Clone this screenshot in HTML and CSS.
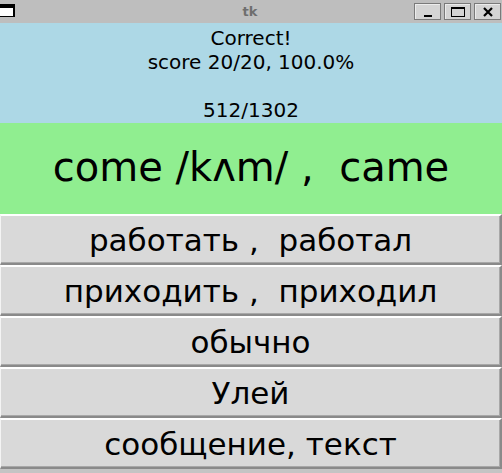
FILE: index.html
```html
<!DOCTYPE html>
<html>
<head>
<meta charset="utf-8">
<link rel="stylesheet" href="styles.css">
</head>
<body>
<div class="window">
  <div class="titlebar">
    <div class="winicon"></div>
    <div class="title">tk</div>
    <div class="wbtns">
      <div class="wbtn"><svg width="12" height="12" viewBox="0 0 12 12"><rect x="2" y="9" width="8" height="2" fill="#000"/></svg></div>
      <div class="wbtn"><svg width="16" height="12" viewBox="0 0 16 12"><rect x="1.5" y="1.5" width="13" height="9" fill="none" stroke="#000" stroke-width="1"/><rect x="1" y="1" width="14" height="2" fill="#000"/></svg></div>
      <div class="wbtn"><svg width="12" height="12" viewBox="0 0 12 12"><path d="M2 2 L10 10 M10 2 L2 10" stroke="#000" stroke-width="2.2"/></svg></div>
    </div>
  </div>
  <div class="status">
    <div>Correct!</div>
    <div>score 20/20, 100.0%</div>
    <div>&nbsp;</div>
    <div>512/1302</div>
  </div>
  <div class="word">come /kʌm/ ,&nbsp; came</div>
  <div class="choices">
    <div class="choice">работать ,&nbsp; работал</div>
    <div class="choice">приходить ,&nbsp; приходил</div>
    <div class="choice">обычно</div>
    <div class="choice">Улей</div>
    <div class="choice">сообщение, текст</div>
  </div>
</div>
</body>
</html>
```
FILE: styles.css
```css
html, body {
  margin: 0;
  padding: 0;
}
body {
  width: 502px;
  height: 473px;
  overflow: hidden;
  background: #c4c4c4;
  font-family: "DejaVu Sans", sans-serif;
  color: #000;
}
.window {
  display: flex;
  flex-direction: column;
  width: 502px;
  height: 473px;
}
.titlebar {
  position: relative;
  height: 23px;
  background: #bebebe;
  display: flex;
  align-items: center;
  justify-content: center;
}
.winicon {
  position: absolute;
  left: 0;
  top: 4px;
  width: 13px;
  height: 8px;
  background: #fff;
  border-top: 4px solid #000;
  border-right: 2px solid #000;
  border-bottom: 1px solid #000;
}
.title {
  font-weight: bold;
  font-size: 13px;
  color: #6e6e6e;
  margin-left: -2px;
}
.wbtns {
  position: absolute;
  right: 1px;
  top: 3px;
  display: flex;
  gap: 3px;
}
.wbtn {
  width: 25px;
  height: 15px;
  background: #d4d4d4;
  border: 1px solid #7a7a7a;
  box-shadow: inset 1px 1px 0 #ececec;
  display: flex;
  align-items: center;
  justify-content: center;
}
.status {
  height: 100px;
  background: #add8e6;
  font-size: 20px;
  line-height: 24px;
  text-align: center;
  display: flex;
  flex-direction: column;
  justify-content: center;
  padding-top: 2px;
  box-sizing: border-box;
}
.word {
  height: 91px;
  background: #90ee90;
  font-size: 40px;
  display: flex;
  align-items: center;
  justify-content: center;
  white-space: pre;
  padding-bottom: 4px;
  box-sizing: border-box;
}
.choices {
  display: flex;
  flex-direction: column;
}
.choice {
  box-sizing: border-box;
  height: 51px;
  background: #d9d9d9;
  border-style: solid;
  border-width: 2px 2px 2px 1px;
  border-color: #ffffff #8a8a8a #8a8a8a #f4f4f4;
  box-shadow: inset -1px -1px 0 #a8a8a8;
  font-size: 31px;
  display: flex;
  align-items: center;
  justify-content: center;
  white-space: pre;
}
```
